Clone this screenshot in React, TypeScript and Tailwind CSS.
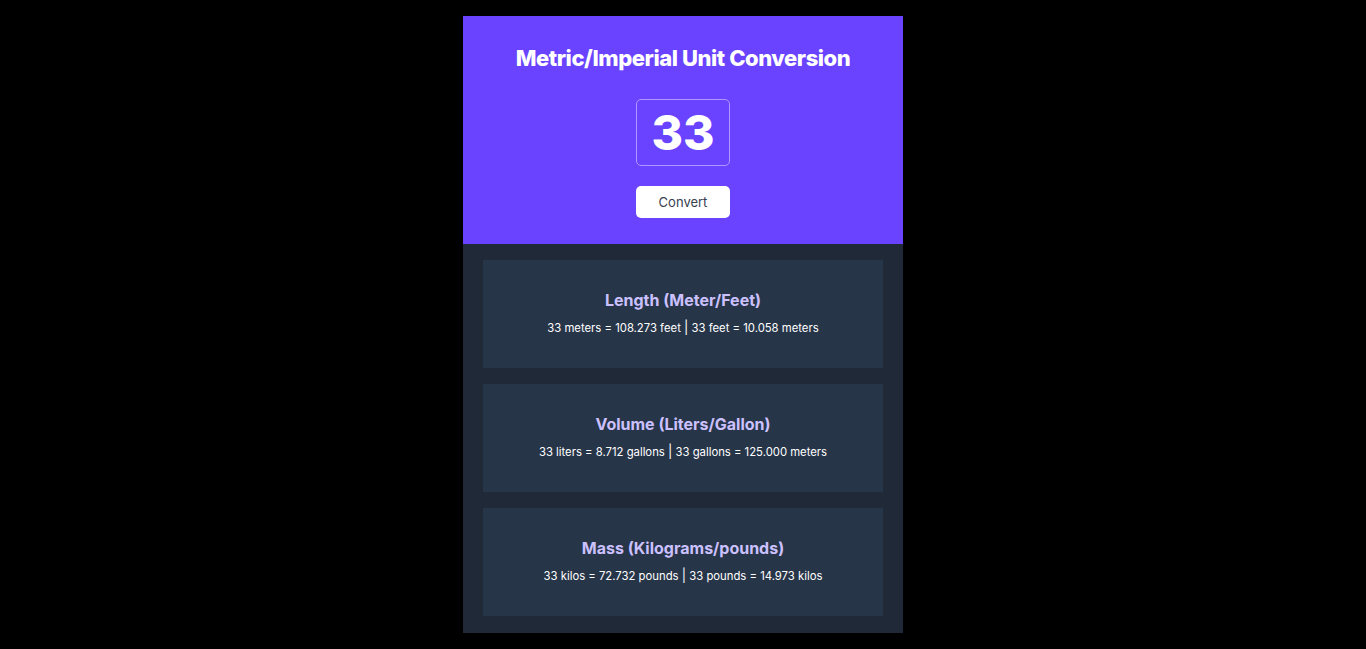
const results = [
  { title: 'Length (Meter/Feet)', left: '33 meters = 108.273 feet', right: '33 feet = 10.058 meters' },
  { title: 'Volume (Liters/Gallon)', left: '33 liters = 8.712 gallons', right: '33 gallons = 125.000 meters' },
  { title: 'Mass (Kilograms/pounds)', left: '33 kilos = 72.732 pounds', right: '33 pounds = 14.973 kilos' },
]

export default function App() {
  return (
    <div className="min-h-[649px] bg-black pt-4 font-['Inter',sans-serif]">
      <main className="mx-auto w-[440px]">
        <section className="flex h-[228px] flex-col items-center bg-[#6943ff] pt-[28px]">
          <h1 className="text-[22px] font-extrabold leading-[28px] tracking-[-0.02em] text-white">
            Metric/Imperial Unit Conversion
          </h1>
          <input
            defaultValue="33"
            className="mt-[27px] h-[67px] w-[94px] rounded-[5px] border border-[#b295ff] bg-transparent text-center text-[48px] font-extrabold text-white outline-none"
          />
          <button className="mt-5 h-8 w-[94px] rounded-[5px] bg-white pt-px text-[13px] text-[#374151]">Convert</button>
        </section>
        <section className="flex flex-col gap-4 bg-[#1f2937] px-5 pb-[17px] pt-4">
          {results.map((r) => (
            <div key={r.title} className="flex h-[108px] flex-col items-center bg-[#273549] pt-[28px]">
              <h2 className="text-base font-bold leading-6 text-[#ccc1ff]">{r.title}</h2>
              <p className="mt-[7px] text-[11.3px] leading-4 text-white">
                {r.left} <span className="text-[13px]">|</span> {r.right}
              </p>
            </div>
          ))}
        </section>
      </main>
    </div>
  )
}
